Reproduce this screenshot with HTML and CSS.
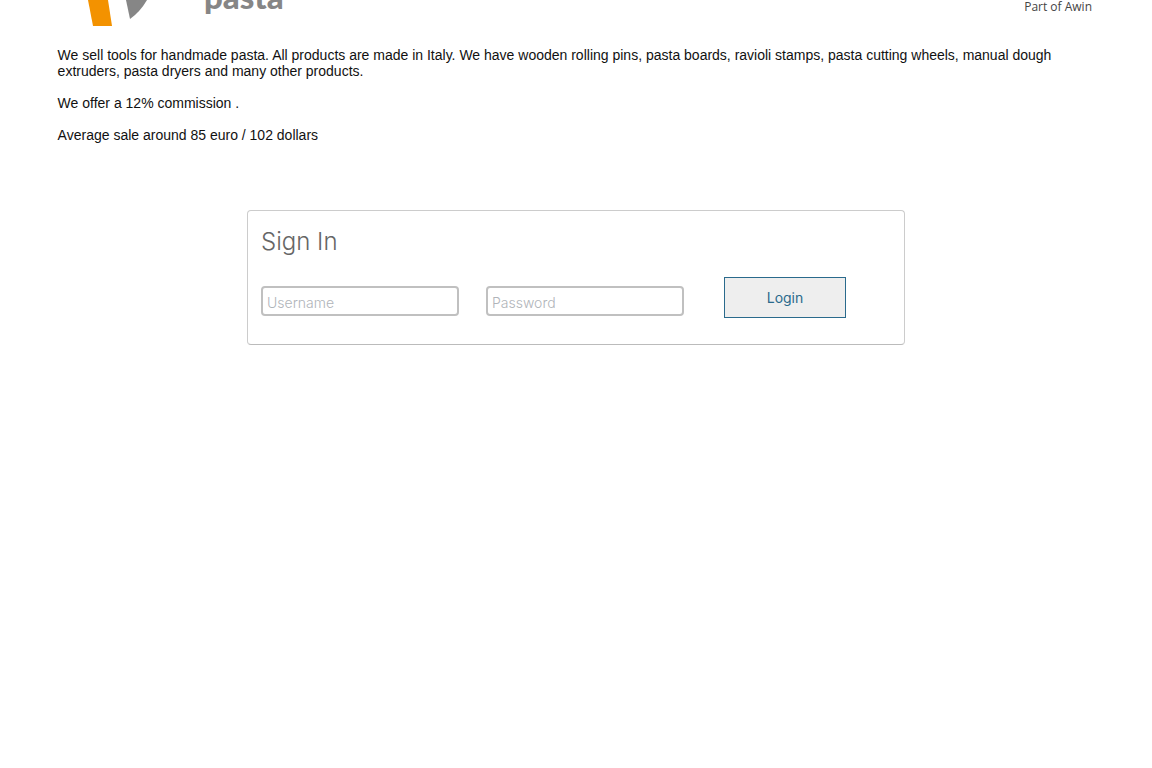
FILE: index.html
```
<!DOCTYPE html>
<html lang="en">
<head>
    <meta charset="UTF-8">
    <title>Sign In</title>
    <meta name="viewport" content="width=device-width, initial-scale=1.0">
    <link rel="stylesheet" href="styles.css">
</head>
<body>
    <header class="header">
        <div class="brand">
            <svg class="brand-mark" width="64" height="26" viewBox="0 0 64 26" aria-hidden="true">
                <path d="M0 0 L20 0 L24 26 L5 26 Z" fill="#f39200"/>
                <path d="M38 0 L59 0 Q52 12 42 19 Z" fill="#868686"/>
            </svg>
            <span class="brand-name">pasta</span>
        </div>
        <span class="network">Part of Awin</span>
    </header>

    <main>
        <div class="intro">
            <p>We sell tools for handmade pasta. All products are made in Italy. We have wooden rolling pins, pasta boards, ravioli stamps, pasta cutting wheels, manual dough extruders, pasta dryers and many other products.</p>
            <p>We offer a 12% commission .</p>
            <p>Average sale around 85 euro / 102 dollars</p>
        </div>

        <section class="signin">
            <h2>Sign In</h2>
            <form class="signin-form" method="POST">
                <input type="text" name="username" placeholder="Username" aria-label="Username">
                <input type="password" name="password" placeholder="Password" aria-label="Password">
                <button type="submit">Login</button>
            </form>
        </section>
    </main>
</body>
</html>
```

FILE: styles.css
```
* {
    box-sizing: border-box;
}

body {
    margin: 0;
    background: #fff;
    color: #111;
    font-family: "Liberation Sans", Arial, sans-serif;
    font-size: 14px;
    line-height: 16px;
}

.header {
    display: flex;
    justify-content: space-between;
    align-items: flex-start;
    height: 26px;
    padding: 0 60px 0 88px;
    overflow: hidden;
}

.brand {
    display: flex;
    align-items: flex-end;
    gap: 52px;
    height: 26px;
}

.brand-mark {
    display: block;
}

.brand-name {
    color: #868686;
    font-family: Lato, sans-serif;
    font-size: 33px;
    font-weight: 900;
    line-height: 40px;
    padding-bottom: 10px;
}

.network {
    color: #444;
    font-family: "Open Sans", sans-serif;
    font-size: 12px;
    line-height: 14px;
}

.intro {
    padding: 21px 5% 0;
}

.intro p {
    margin: 0 0 16px;
}

.signin {
    max-width: 658px;
    margin: 67px auto 0;
    padding: 16px 58px 26px 13px;
    border: 1px solid #ccc;
    border-bottom-color: #bbb;
    border-radius: 4px;
    font-family: Inter, sans-serif;
}

.signin h2 {
    margin: 0 0 20px;
    color: #666;
    font-size: 24px;
    font-weight: 300;
    line-height: 30px;
}

.signin-form {
    display: flex;
    align-items: flex-end;
}

.signin-form input {
    flex: 1;
    min-width: 0;
    height: 30px;
    margin: 0 27px 2px 0;
    padding: 2px 4px 0;
    border: 2px solid #c0c0c0;
    border-radius: 4px;
    background: #fff;
    color: #666;
    font: 300 14px Inter, sans-serif;
}

.signin-form input::placeholder {
    color: #b0b4b9;
}

.signin-form button {
    width: 122px;
    height: 41px;
    margin-left: 13px;
    border: 1px solid #2a6a8c;
    background: #eee;
    color: #2a6a8c;
    font: 400 14px Inter, sans-serif;
    cursor: pointer;
}
```
